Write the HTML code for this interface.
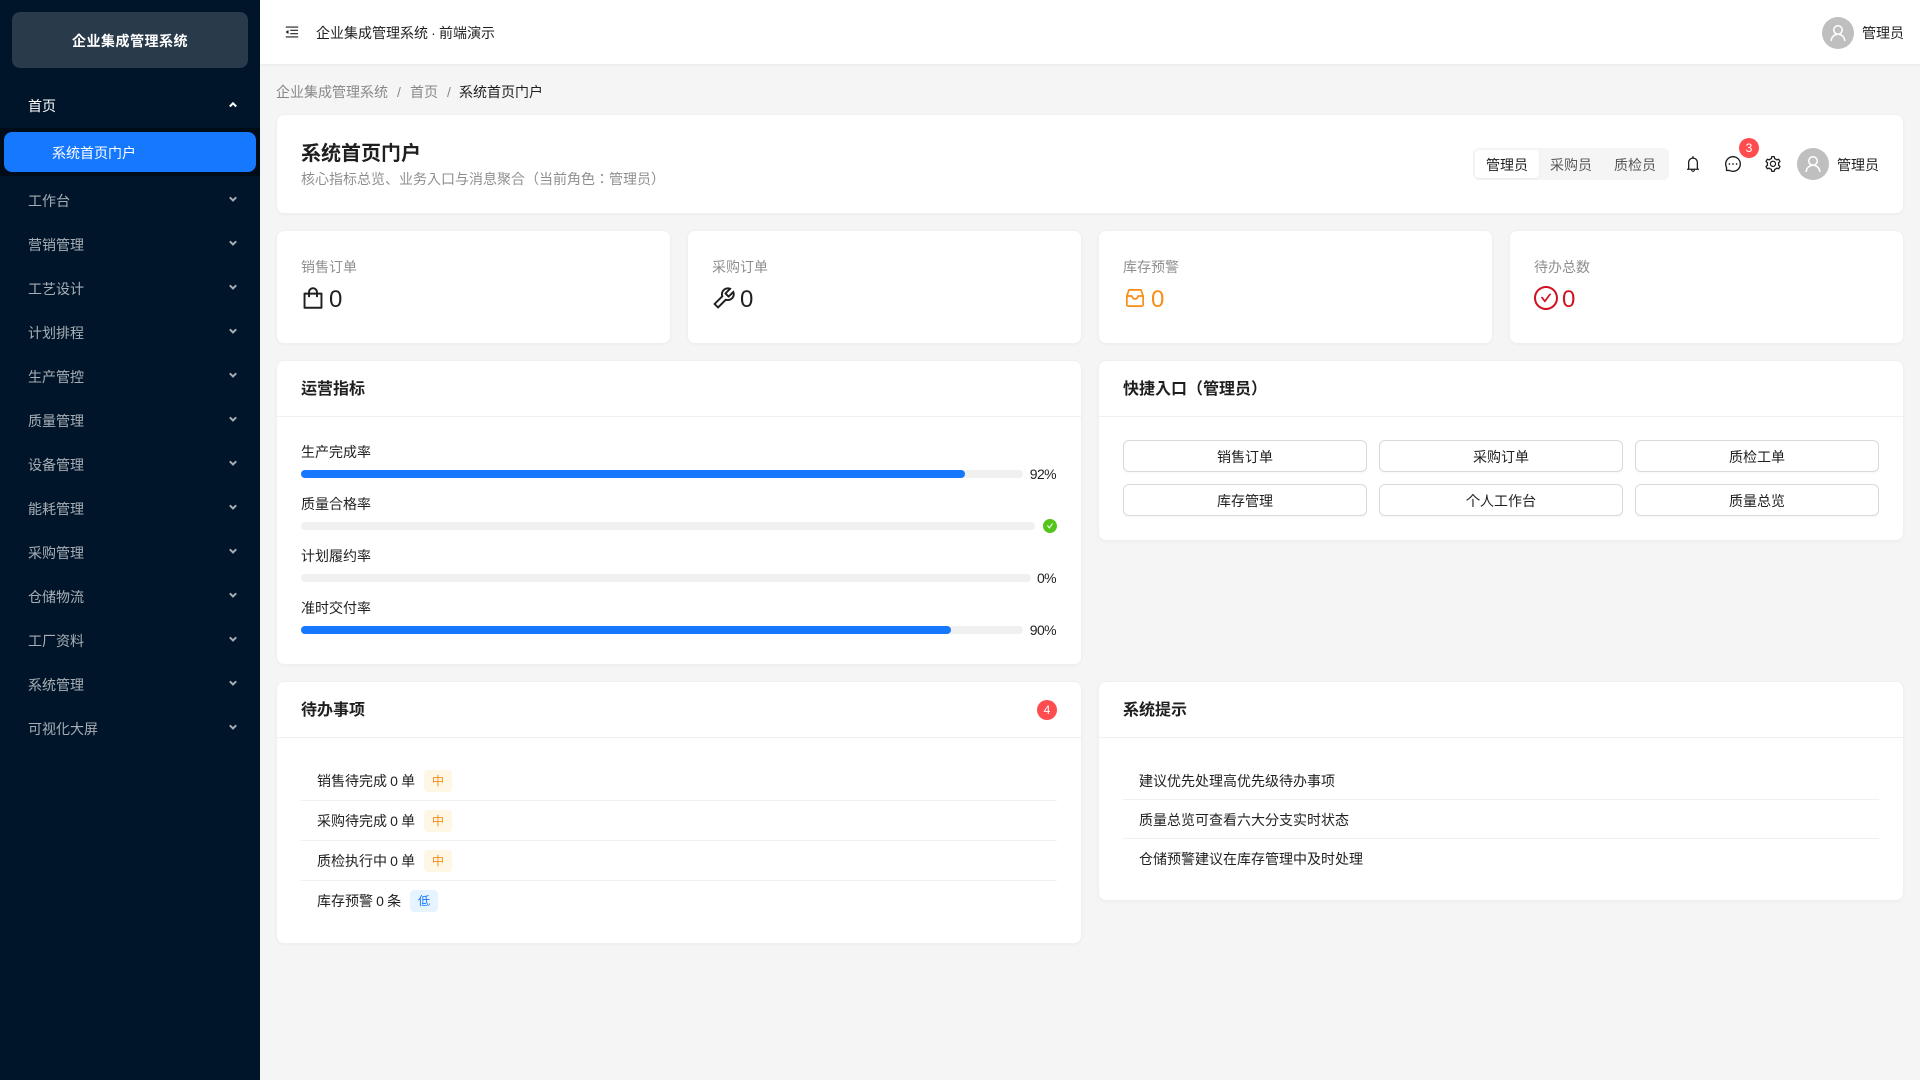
<!DOCTYPE html>
<html>
<head>
<meta charset="utf-8">
<title>企业集成管理系统</title>
<style>
*{box-sizing:border-box;margin:0;padding:0}
html,body{width:1920px;height:1080px;overflow:hidden;background:#f5f5f5;font-family:"Liberation Sans","Noto Sans CJK JP",sans-serif;font-size:14px;color:rgba(0,0,0,.88)}
.a{position:absolute}
.t{position:absolute;line-height:22px;height:22px;white-space:nowrap;margin-top:1px;word-spacing:-.75px}
.pct{letter-spacing:-.6px}
svg{display:block;fill:currentColor}
.side{left:0;top:0;width:260px;height:1080px;background:#001529}
.logo{left:12px;top:12px;width:236px;height:56px;background:rgba(255,255,255,.16);border-radius:8px;color:#fff;font-weight:700;text-align:center;line-height:58px;letter-spacing:.5px}
.mi{color:rgba(255,255,255,.65);left:28px}
.chev{position:absolute;left:228px;width:10px;height:10px;fill:none;stroke:rgba(255,255,255,.65);stroke-width:2}
.head{left:260px;top:0;width:1660px;height:64px;background:#fff;box-shadow:0 1px 2px rgba(0,0,0,.05)}
.card{position:absolute;background:#fff;border:1px solid #f0f0f0;border-radius:8px;box-shadow:0 1px 2px rgba(0,0,0,.03)}
.lab{color:rgba(0,0,0,.45)}
.val{position:absolute;font-size:24px;line-height:32px;height:32px;margin-top:1px}
.ct{position:absolute;font-size:16px;font-weight:700;line-height:24px;height:24px;white-space:nowrap;margin-top:1px}
.div{position:absolute;height:1px;background:#f0f0f0}
.track{position:absolute;height:8px;background:#f0f0f0;border-radius:4px}
.fill{position:absolute;height:8px;background:#1677ff;border-radius:4px}
.btn{position:absolute;width:244px;height:32px;background:#fff;border:1px solid #d9d9d9;border-radius:6px;box-shadow:0 2px 0 rgba(0,0,0,.02);text-align:center;line-height:32px}
.tag{position:absolute;width:28px;height:22px;border-radius:4px;font-size:12px;line-height:22px;text-align:center}
.tm{background:#fff7e6;color:#fa8c16}
.tl{background:#e6f4ff;color:#1677ff}
.avatar{position:absolute;width:32px;height:32px;border-radius:50%;background:#bfbfbf;color:#fff}
.avatar svg{position:absolute;left:7px;top:7px}
.badge{position:absolute;width:20px;height:20px;border-radius:50%;background:#ff4d4f;color:#fff;font-size:12px;line-height:20px;text-align:center}
</style>
</head>
<body>
<div class="a side">
  <div class="a logo">企业集成管理系统</div>
  <div class="t mi" style="top:94px;color:#fff">首页</div>
  <svg class="chev" style="top:100px;stroke:#fff" viewBox="0 0 10 10"><path d="M1.800 6.500 5 3.300l3.200 3.200"/></svg>
  <div class="a" style="left:0;top:128px;width:260px;height:48px;background:#000c17"></div>
  <div class="a" style="left:4px;top:132px;width:252px;height:40px;background:#1677ff;border-radius:8px"></div>
  <div class="t" style="left:52px;top:141px;color:#fff">系统首页门户</div>

  <div class="t mi" style="top:189px">工作台</div><svg class="chev" style="top:194px" viewBox="0 0 10 10"><path d="M1.800 3.300 5 6.500l3.200-3.200"/></svg>
  <div class="t mi" style="top:233px">营销管理</div><svg class="chev" style="top:238px" viewBox="0 0 10 10"><path d="M1.800 3.300 5 6.500l3.200-3.200"/></svg>
  <div class="t mi" style="top:277px">工艺设计</div><svg class="chev" style="top:282px" viewBox="0 0 10 10"><path d="M1.800 3.300 5 6.500l3.200-3.200"/></svg>
  <div class="t mi" style="top:321px">计划排程</div><svg class="chev" style="top:326px" viewBox="0 0 10 10"><path d="M1.800 3.300 5 6.500l3.200-3.200"/></svg>
  <div class="t mi" style="top:365px">生产管控</div><svg class="chev" style="top:370px" viewBox="0 0 10 10"><path d="M1.800 3.300 5 6.500l3.200-3.200"/></svg>
  <div class="t mi" style="top:409px">质量管理</div><svg class="chev" style="top:414px" viewBox="0 0 10 10"><path d="M1.800 3.300 5 6.500l3.200-3.200"/></svg>
  <div class="t mi" style="top:453px">设备管理</div><svg class="chev" style="top:458px" viewBox="0 0 10 10"><path d="M1.800 3.300 5 6.500l3.200-3.200"/></svg>
  <div class="t mi" style="top:497px">能耗管理</div><svg class="chev" style="top:502px" viewBox="0 0 10 10"><path d="M1.800 3.300 5 6.500l3.200-3.200"/></svg>
  <div class="t mi" style="top:541px">采购管理</div><svg class="chev" style="top:546px" viewBox="0 0 10 10"><path d="M1.800 3.300 5 6.500l3.200-3.200"/></svg>
  <div class="t mi" style="top:585px">仓储物流</div><svg class="chev" style="top:590px" viewBox="0 0 10 10"><path d="M1.800 3.300 5 6.500l3.200-3.200"/></svg>
  <div class="t mi" style="top:629px">工厂资料</div><svg class="chev" style="top:634px" viewBox="0 0 10 10"><path d="M1.800 3.300 5 6.500l3.200-3.200"/></svg>
  <div class="t mi" style="top:673px">系统管理</div><svg class="chev" style="top:678px" viewBox="0 0 10 10"><path d="M1.800 3.300 5 6.500l3.200-3.200"/></svg>
  <div class="t mi" style="top:717px">可视化大屏</div><svg class="chev" style="top:722px" viewBox="0 0 10 10"><path d="M1.800 3.300 5 6.500l3.200-3.200"/></svg>
</div>

<div class="a head"></div>
<svg class="a" style="left:285px;top:25px;color:rgba(0,0,0,.88)" width="14" height="14" viewBox="64 64 896 896"><path d="M408 442h480c4.400 0 8-3.600 8-8v-56c0-4.400-3.600-8-8-8H408c-4.400 0-8 3.600-8 8v56c0 4.400 3.600 8 8 8zm-8 204c0 4.400 3.600 8 8 8h480c4.400 0 8-3.600 8-8v-56c0-4.400-3.600-8-8-8H408c-4.400 0-8 3.600-8 8v56zm504-486H120c-4.400 0-8 3.600-8 8v56c0 4.400 3.600 8 8 8h784c4.400 0 8-3.600 8-8v-56c0-4.400-3.600-8-8-8zm0 632H120c-4.400 0-8 3.600-8 8v56c0 4.400 3.600 8 8 8h784c4.400 0 8-3.600 8-8v-56c0-4.400-3.600-8-8-8zM115.400 518.900L271.700 642c5.800 4.600 14.400.5 14.400-6.900V388.900c0-7.400-8.500-11.500-14.400-6.900L115.400 505.100a8.740 8.740 0 000 13.800z"/></svg>
<div class="t" style="left:316px;top:21px">企业集成管理系统 · 前端演示</div>
<div class="avatar" style="left:1822px;top:17px"><svg width="18" height="18" viewBox="64 64 896 896"><path d="M858.500 763.600a374 374 0 00-80.600-119.500 375.630 375.630 0 00-119.500-80.600c-.4-.2-.8-.3-1.200-.5C719.500 518 760 444.700 760 362c0-137-111-248-248-248S264 225 264 362c0 82.700 40.500 156 102.800 201.100-.4.2-.8.3-1.200.5-44.800 18.900-85 46-119.500 80.600a375.630 375.630 0 00-80.600 119.500A371.700 371.700 0 00136 901.800a8 8 0 008 8.200h60c4.400 0 7.900-3.500 8-7.800 2-77.200 33-149.500 87.800-204.300 56.700-56.700 132-87.900 212.200-87.900s155.500 31.200 212.200 87.900C779 752.700 810 825 812 902.200c.1 4.400 3.600 7.800 8 7.800h60a8 8 0 008-8.200c-1-47.800-10.900-94.300-29.500-138.200zM512 534c-45.900 0-89.100-17.900-121.500-50.400S340 407.900 340 362c0-45.900 17.900-89.100 50.500-121.600S466.100 190 512 190s89.100 17.900 121.500 50.400S684 316.100 684 362c0 45.900-17.900 89.100-50.500 121.600S557.900 534 512 534z"/></svg></div>
<div class="t" style="left:1862px;top:21px">管理员</div>

<div class="t lab" style="left:276px;top:80px">企业集成管理系统</div>
<div class="t lab" style="left:397px;top:80px">/</div>
<div class="t lab" style="left:410px;top:80px">首页</div>
<div class="t lab" style="left:447px;top:80px">/</div>
<div class="t" style="left:459px;top:80px">系统首页门户</div>

<!-- page header -->
<div class="card" style="left:276px;top:114px;width:1628px;height:100px"></div>
<div class="t" style="left:301px;top:139px;font-size:20px;font-weight:700;line-height:28px;height:28px">系统首页门户</div>
<div class="t lab" style="left:301px;top:167px">核心指标总览、业务入口与消息聚合（当前角色：管理员）</div>
<div class="a" style="left:1473px;top:148px;width:196px;height:32px;background:#f5f5f5;border-radius:6px"></div>
<div class="a" style="left:1475px;top:150px;width:64px;height:28px;background:#fff;border-radius:4px;box-shadow:0 1px 2px rgba(0,0,0,.04)"></div>
<div class="t" style="left:1486px;top:153px">管理员</div>
<div class="t" style="left:1550px;top:153px;color:rgba(0,0,0,.65)">采购员</div>
<div class="t" style="left:1614px;top:153px;color:rgba(0,0,0,.65)">质检员</div>
<svg class="a" style="left:1685px;top:156px" width="16" height="16" viewBox="64 64 896 896"><path d="M816 768h-24V428c0-141.100-104.300-257.700-240-277.100V112c0-22.100-17.900-40-40-40s-40 17.900-40 40v38.900c-135.700 19.400-240 136-240 277.100v340h-24c-17.700 0-32 14.300-32 32v32c0 4.400 3.600 8 8 8h216c0 61.800 50.200 112 112 112s112-50.200 112-112h216c4.400 0 8-3.600 8-8v-32c0-17.700-14.300-32-32-32zM512 888c-26.500 0-48-21.500-48-48h96c0 26.500-21.500 48-48 48zM304 768V428c0-55.600 21.600-107.800 60.900-147.100S456.400 220 512 220c55.600 0 107.800 21.600 147.100 60.900S720 372.400 720 428v340H304z"/></svg>
<svg class="a" style="left:1725px;top:156px" width="16" height="16" viewBox="64 64 896 896"><path d="M464 512a48 48 0 1096 0 48 48 0 10-96 0zm200 0a48 48 0 1096 0 48 48 0 10-96 0zm-400 0a48 48 0 1096 0 48 48 0 10-96 0zm661.200-173.600c-22.600-53.700-55-101.900-96.300-143.300a444.350 444.350 0 00-143.300-96.300C630.600 75.700 572.200 64 512 64h-2c-60.600.3-119.300 12.300-174.500 35.900a445.350 445.350 0 00-142 96.500c-40.900 41.300-73 89.300-95.200 142.800-23 55.400-34.600 114.300-34.300 174.900A449.400 449.400 0 00112 714v152a46 46 0 0046 46h152.100A449.400 449.400 0 00510 960h2.100c59.900 0 118-11.600 172.700-34.300a444.480 444.480 0 00142.800-95.200c41.300-40.900 73.800-88.700 96.500-142 23.600-55.200 35.600-113.900 35.900-174.500.3-60.900-11.500-120-34.800-175.600zm-151.100 438C704 845.800 611 884 512 884h-1.700c-60.300-.3-120.200-15.300-173.100-43.500l-8.400-4.500H188V695.200l-4.500-8.400C155.300 633.900 140.300 574 140 513.700c-.4-99.700 37.700-193.300 107.600-263.800 69.800-70.500 163.100-109.500 262.800-109.900h1.700c50 0 98.500 9.700 144.200 28.900 44.600 18.700 84.600 45.600 119 80 34.300 34.300 61.300 74.400 80 119 19.400 46.200 29.100 95.200 28.900 145.800-.6 99.600-39.700 192.900-110.100 262.700z"/></svg>
<div class="badge" style="left:1739px;top:138px">3</div>
<svg class="a" style="left:1765px;top:156px" width="16" height="16" viewBox="64 64 896 896"><path d="M924.800 625.700l-65.500-56c3.100-19 4.700-38.400 4.700-57.800s-1.600-38.800-4.700-57.800l65.500-56a32.030 32.030 0 009.300-35.200l-.9-2.600a443.740 443.740 0 00-79.700-137.900l-1.800-2.100a32.120 32.120 0 00-35.100-9.500l-81.300 28.900c-30-24.600-63.500-44-99.700-57.600l-15.700-85a32.050 32.050 0 00-25.800-25.700l-2.700-.5c-52.100-9.400-106.900-9.400-159 0l-2.700.5a32.050 32.050 0 00-25.800 25.700l-15.800 85.400a351.860 351.860 0 00-99 57.400l-81.900-29.100a32 32 0 00-35.100 9.500l-1.800 2.100a446.020 446.020 0 00-79.700 137.900l-.9 2.600c-4.500 12.500-.8 26.500 9.300 35.200l66.300 56.600c-3.100 18.800-4.600 38-4.600 57.100 0 19.200 1.500 38.400 4.600 57.100L99 625.500a32.030 32.030 0 00-9.300 35.200l.9 2.600c18.100 50.400 44.900 96.900 79.700 137.900l1.800 2.100a32.120 32.120 0 0035.100 9.500l81.900-29.100c29.800 24.500 63.100 43.900 99 57.400l15.800 85.400a32.050 32.050 0 0025.800 25.700l2.700.5a449.400 449.400 0 00159 0l2.700-.5a32.050 32.050 0 0025.800-25.700l15.700-85a350 350 0 0099.700-57.600l81.300 28.900a32 32 0 0035.100-9.500l1.800-2.100c34.800-41.100 61.600-87.500 79.700-137.900l.9-2.600c4.500-12.300.8-26.300-9.300-35zM788.300 465.900c2.500 15.100 3.800 30.600 3.800 46.100s-1.300 31-3.800 46.100l-6.600 40.100 74.700 63.900a370.030 370.030 0 01-42.600 73.600L721 702.800l-31.400 25.800c-23.900 19.600-50.500 35-79.300 45.800l-38.100 14.300-17.900 97a377.500 377.500 0 01-85 0l-17.900-97.200-37.800-14.500c-28.500-10.800-55-26.200-78.700-45.700l-31.400-25.900-93.400 33.200c-17-22.900-31.200-47.600-42.600-73.600l75.500-64.500-6.500-40c-2.400-14.900-3.700-30.300-3.700-45.500 0-15.300 1.200-30.600 3.700-45.500l6.500-40-75.500-64.500c11.300-26.100 25.600-50.700 42.600-73.600l93.400 33.200 31.400-25.900c23.700-19.500 50.200-34.900 78.700-45.700l37.900-14.300 17.900-97.200c28.100-3.200 56.800-3.200 85 0l17.900 97 38.100 14.300c28.700 10.800 55.400 26.200 79.300 45.800l31.400 25.800 92.800-32.900c17 22.900 31.200 47.600 42.600 73.600L781.800 426l6.500 39.900zM512 326c-97.200 0-176 78.800-176 176s78.800 176 176 176 176-78.800 176-176-78.800-176-176-176zm79.200 255.200A111.600 111.600 0 01512 614c-29.900 0-58-11.700-79.200-32.800A111.600 111.600 0 01400 502c0-29.900 11.700-58 32.800-79.200C454 401.600 482.100 390 512 390c29.900 0 58 11.600 79.200 32.800A111.600 111.600 0 01624 502c0 29.900-11.700 58-32.800 79.200z"/></svg>
<div class="avatar" style="left:1797px;top:148px"><svg width="18" height="18" viewBox="64 64 896 896"><path d="M858.500 763.600a374 374 0 00-80.600-119.500 375.630 375.630 0 00-119.500-80.600c-.4-.2-.8-.3-1.200-.5C719.500 518 760 444.700 760 362c0-137-111-248-248-248S264 225 264 362c0 82.700 40.500 156 102.800 201.100-.4.2-.8.3-1.200.5-44.800 18.900-85 46-119.500 80.600a375.630 375.630 0 00-80.600 119.500A371.700 371.700 0 00136 901.800a8 8 0 008 8.200h60c4.400 0 7.900-3.500 8-7.800 2-77.200 33-149.500 87.800-204.300 56.700-56.700 132-87.900 212.200-87.900s155.500 31.200 212.200 87.900C779 752.700 810 825 812 902.200c.1 4.400 3.600 7.800 8 7.800h60a8 8 0 008-8.200c-1-47.800-10.900-94.300-29.500-138.200zM512 534c-45.900 0-89.100-17.900-121.500-50.400S340 407.900 340 362c0-45.900 17.900-89.100 50.500-121.600S466.100 190 512 190s89.100 17.900 121.500 50.400S684 316.100 684 362c0 45.900-17.900 89.100-50.500 121.600S557.900 534 512 534z"/></svg></div>
<div class="t" style="left:1837px;top:153px">管理员</div>

<!-- stats -->
<div class="card" style="left:276px;top:230px;width:395px;height:114px"></div>
<div class="card" style="left:687px;top:230px;width:395px;height:114px"></div>
<div class="card" style="left:1098px;top:230px;width:395px;height:114px"></div>
<div class="card" style="left:1509px;top:230px;width:395px;height:114px"></div>

<div class="t lab" style="left:301px;top:255px">销售订单</div>
<svg class="a" style="left:301px;top:286px" width="24" height="24" viewBox="64 64 896 896"><path d="M832 312H696v-16c0-101.600-82.400-184-184-184s-184 82.400-184 184v16H192c-17.700 0-32 14.300-32 32v536c0 17.700 14.300 32 32 32h640c17.700 0 32-14.300 32-32V344c0-17.700-14.300-32-32-32zm-432-16c0-61.900 50.100-112 112-112s112 50.100 112 112v16H400v-16zm392 544H232V384h96v88c0 4.400 3.600 8 8 8h56c4.400 0 8-3.600 8-8v-88h224v88c0 4.400 3.600 8 8 8h56c4.400 0 8-3.600 8-8v-88h96v456z"/></svg>
<div class="val" style="left:329px;top:283px">0</div>

<div class="t lab" style="left:712px;top:255px">采购订单</div>
<svg class="a" style="left:712px;top:286px" width="24" height="24" viewBox="64 64 896 896"><path d="M876.600 239.500c-.5-.9-1.200-1.800-2-2.500-5-5-13.100-5-18.100 0L684.200 409.300l-67.900-67.900L788.700 169c.8-.8 1.400-1.600 2-2.500 3.600-6.100 1.600-13.900-4.500-17.500-98.200-58-226.800-44.700-311.300 39.700-67 67-89.200 162-66.500 247.400l-293 293c-3 3-2.800 7.900.3 11l169.700 169.700c3.100 3.100 8.100 3.300 11 .3l292.900-292.900c85.500 22.800 180.500.7 247.600-66.400 84.400-84.500 97.700-213.100 39.700-311.300zM786 499.800c-58.100 58.100-145.300 69.300-214.600 33.600l-8.800 8.800-.1-.1-274 274.100-79.200-79.200 230.100-230.100s0 .1.1.1l52.800-52.800c-35.700-69.300-24.500-156.500 33.600-214.600a184.200 184.200 0 01144-53.500L537 318.900a32.050 32.050 0 000 45.300l124.500 124.500a32.050 32.050 0 0045.300 0l132.800-132.800c3.700 51.800-14.400 104.800-53.600 143.900z"/></svg>
<div class="val" style="left:740px;top:283px">0</div>

<div class="t lab" style="left:1123px;top:255px">库存预警</div>
<svg class="a" style="left:1123px;top:286px;color:#fa8c16;fill:none" width="24" height="24" viewBox="0 0 24 24"><path d="M6 3.900h12l2.150 6.100v8.700a1.400 1.400 0 0 1-1.400 1.400H5.250a1.400 1.400 0 0 1-1.400-1.400V10zM3.850 10h5c.5 2 1.500 3 3.150 3s2.650-1 3.150-3h5" stroke="currentColor" stroke-width="1.700" stroke-linejoin="round"/></svg>
<div class="val" style="left:1151px;top:283px;color:#fa8c16">0</div>

<div class="t lab" style="left:1534px;top:255px">待办总数</div>
<svg class="a" style="left:1534px;top:286px;color:#cf1322" width="24" height="24" viewBox="64 64 896 896"><path d="M699 353h-46.900c-10.200 0-19.900 4.900-25.900 13.300L469 584.300l-71.200-98.800c-6-8.300-15.600-13.300-25.900-13.300H325c-6.500 0-10.300 7.400-6.500 12.700l124.600 172.800a31.800 31.800 0 0051.700 0l210.600-292c3.900-5.300.1-12.700-6.400-12.700z"/><path d="M512 64C264.600 64 64 264.600 64 512s200.600 448 448 448 448-200.600 448-448S759.400 64 512 64zm0 820c-205.400 0-372-166.600-372-372s166.600-372 372-372 372 166.600 372 372-166.600 372-372 372z"/></svg>
<div class="val" style="left:1562px;top:283px;color:#cf1322">0</div>

<!-- metrics -->
<div class="card" style="left:276px;top:360px;width:806px;height:305px"></div>
<div class="ct" style="left:301px;top:377px">运营指标</div>
<div class="div" style="left:277px;top:416px;width:804px"></div>

<div class="t" style="left:301px;top:440px">生产完成率</div>
<div class="track" style="left:301px;top:470px;width:722px"></div>
<div class="fill" style="left:301px;top:470px;width:664px"></div>
<div class="t pct" style="right:864px;top:462px">92%</div>

<div class="t" style="left:301px;top:492px">质量合格率</div>
<div class="track" style="left:301px;top:522px;width:734px"></div>
<svg class="a" style="left:1043px;top:519px;color:#52c41a" width="14" height="14" viewBox="64 64 896 896"><path d="M512 64C264.600 64 64 264.600 64 512s200.600 448 448 448 448-200.600 448-448S759.400 64 512 64zm193.500 301.700l-210.600 292a31.800 31.800 0 01-51.700 0L318.500 484.900c-3.800-5.300 0-12.700 6.500-12.700h46.900c10.200 0 19.900 4.900 25.900 13.300l71.200 98.800 157.200-218c6-8.300 15.600-13.300 25.900-13.300H699c6.500 0 10.300 7.400 6.500 12.700z"/></svg>

<div class="t" style="left:301px;top:544px">计划履约率</div>
<div class="track" style="left:301px;top:574px;width:730px"></div>
<div class="t pct" style="right:864px;top:566px">0%</div>

<div class="t" style="left:301px;top:596px">准时交付率</div>
<div class="track" style="left:301px;top:626px;width:722px"></div>
<div class="fill" style="left:301px;top:626px;width:650px"></div>
<div class="t pct" style="right:864px;top:618px">90%</div>

<!-- quick entries -->
<div class="card" style="left:1098px;top:360px;width:806px;height:181px"></div>
<div class="ct" style="left:1123px;top:377px">快捷入口（管理员）</div>
<div class="div" style="left:1099px;top:416px;width:804px"></div>
<div class="btn" style="left:1123px;top:440px">销售订单</div>
<div class="btn" style="left:1379px;top:440px">采购订单</div>
<div class="btn" style="left:1635px;top:440px">质检工单</div>
<div class="btn" style="left:1123px;top:484px">库存管理</div>
<div class="btn" style="left:1379px;top:484px">个人工作台</div>
<div class="btn" style="left:1635px;top:484px">质量总览</div>

<!-- todos -->
<div class="card" style="left:276px;top:681px;width:806px;height:263px"></div>
<div class="ct" style="left:301px;top:698px">待办事项</div>
<div class="badge" style="left:1037px;top:700px">4</div>
<div class="div" style="left:277px;top:737px;width:804px"></div>
<div class="t" style="left:317px;top:769px">销售待完成 0 单</div><div class="tag tm" style="left:424px;top:770px">中</div>
<div class="div" style="left:301px;top:800px;width:756px"></div>
<div class="t" style="left:317px;top:809px">采购待完成 0 单</div><div class="tag tm" style="left:424px;top:810px">中</div>
<div class="div" style="left:301px;top:840px;width:756px"></div>
<div class="t" style="left:317px;top:849px">质检执行中 0 单</div><div class="tag tm" style="left:424px;top:850px">中</div>
<div class="div" style="left:301px;top:880px;width:756px"></div>
<div class="t" style="left:317px;top:889px">库存预警 0 条</div><div class="tag tl" style="left:410px;top:890px">低</div>

<!-- tips -->
<div class="card" style="left:1098px;top:681px;width:806px;height:220px"></div>
<div class="ct" style="left:1123px;top:698px">系统提示</div>
<div class="div" style="left:1099px;top:737px;width:804px"></div>
<div class="t" style="left:1139px;top:769px">建议优先处理高优先级待办事项</div>
<div class="div" style="left:1123px;top:799px;width:756px"></div>
<div class="t" style="left:1139px;top:808px">质量总览可查看六大分支实时状态</div>
<div class="div" style="left:1123px;top:838px;width:756px"></div>
<div class="t" style="left:1139px;top:847px">仓储预警建议在库存管理中及时处理</div>
</body>
</html>
